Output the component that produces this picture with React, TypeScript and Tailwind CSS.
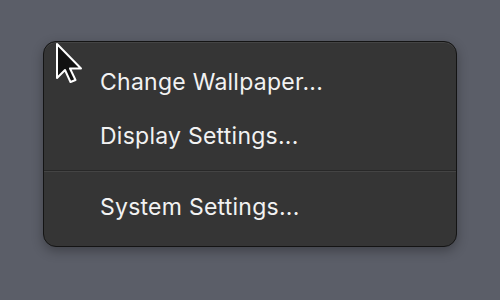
export default function App() {
  return (
    <div className="relative h-[300px] w-[500px] bg-[#5b5e68] pl-[43px] pt-[41px]" style={{ fontFamily: "Inter, sans-serif" }}>
      <div className="w-[414px] rounded-[13px] border border-[#141414] bg-[#353535] pt-[13px] pb-[12px] shadow-[0_4px_12px_rgba(0,0,0,0.3),inset_0_1px_0_rgba(255,255,255,0.08)]">
        <div className="flex h-[54px] items-center pl-[56px] text-[23px] tracking-[0.25px] text-[#f2f2f2]">Change Wallpaper...</div>
        <div className="flex h-[54px] items-center pl-[56px] text-[23px] tracking-[0.25px] text-[#f2f2f2]">Display Settings...</div>
        <div className="mt-[7px] mb-[8px] h-[2px] border-t border-[#282828] border-b-[#444444] border-b" />
        <div className="flex h-[54px] items-center pl-[56px] text-[23px] tracking-[0.25px] text-[#f2f2f2]">System Settings...</div>
      </div>
      <svg className="absolute left-[55px] top-[42px]" width="30" height="44" viewBox="0 0 30 44">
        <path
          d="M2 2 L2 36 L10 28 L15.5 40 L20.5 38 L15 26.5 L26 26.5 Z"
          fill="#111"
          stroke="#fff"
          strokeWidth="2"
          strokeLinejoin="round"
        />
      </svg>
    </div>
  );
}
